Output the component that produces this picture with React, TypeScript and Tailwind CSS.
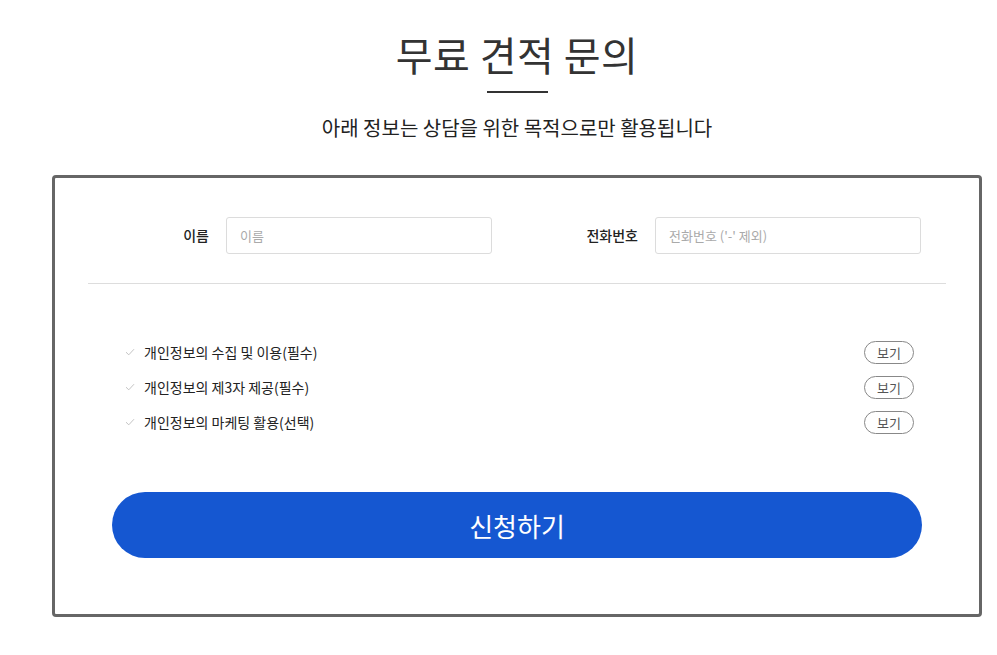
import React from 'react';

const font = { fontFamily: '"Noto Sans CJK KR", "Noto Sans", sans-serif' };

const terms = [
  '개인정보의 수집 및 이용(필수)',
  '개인정보의 제3자 제공(필수)',
  '개인정보의 마케팅 활용(선택)',
];

function Check() {
  return (
    <svg width="10" height="8" viewBox="0 0 10 8" fill="none" className="shrink-0">
      <path d="M1 4.2 L3.8 6.8 L9 1.2" stroke="#c4c4c4" strokeWidth="1" />
    </svg>
  );
}

function Field({ label, placeholder }: { label: string; placeholder: string }) {
  return (
    <div className="flex items-center">
      <label className="w-[122px] pr-[1px] text-right text-[14px] font-medium text-[#222]">{label}</label>
      <input
        placeholder={placeholder}
        className="ml-[16px] h-[37px] w-[266px] rounded-[3px] border border-[#dcdcdc] px-[13px] text-[13px] text-[#333] outline-none placeholder:text-[#aaa]"
      />
    </div>
  );
}

export default function App() {
  return (
    <div className="min-h-screen bg-white" style={font}>
      <div className="ml-[52px] w-[930px] pt-[26px]">
        {/* Heading */}
        <div className="flex flex-col items-center">
          <h1 className="text-[40px] leading-[56px] font-normal text-[#333] tracking-[0.5px]">무료 견적 문의</h1>
          <div className="mt-[9px] h-[2px] w-[61px] bg-[#333]" />
          <p className="mt-[21px] text-[20px] leading-[28px] text-[#222]">아래 정보는 상담을 위한 목적으로만 활용됩니다</p>
        </div>

        {/* Form card */}
        <div className="mt-[33px] rounded-[4px] border-[3px] border-[#666] px-[33px] pt-[39px] pb-[56px]">
          <div className="grid grid-cols-2">
            <Field label="이름" placeholder="이름" />
            <Field label="전화번호" placeholder="전화번호 ('-' 제외)" />
          </div>
          <div className="mt-[29px] h-px bg-[#ddd]" />

          <div className="mt-[56px] flex flex-col gap-[11px] pl-[37px] pr-[32px]">
            {terms.map((t) => (
              <div key={t} className="flex h-[24px] items-center">
                <Check />
                <span className="ml-[9px] text-[14px] text-[#222]">{t}</span>
                <button className="ml-auto h-[23px] w-[50px] rounded-full border border-[#888] text-[13px] leading-none text-[#555]">
                  보기
                </button>
              </div>
            ))}
          </div>

          <div className="mt-[58px] px-[24px]">
            <button className="h-[66px] w-full rounded-full bg-[#1557d1] text-[26px] text-white">신청하기</button>
          </div>
        </div>
      </div>
    </div>
  );
}
